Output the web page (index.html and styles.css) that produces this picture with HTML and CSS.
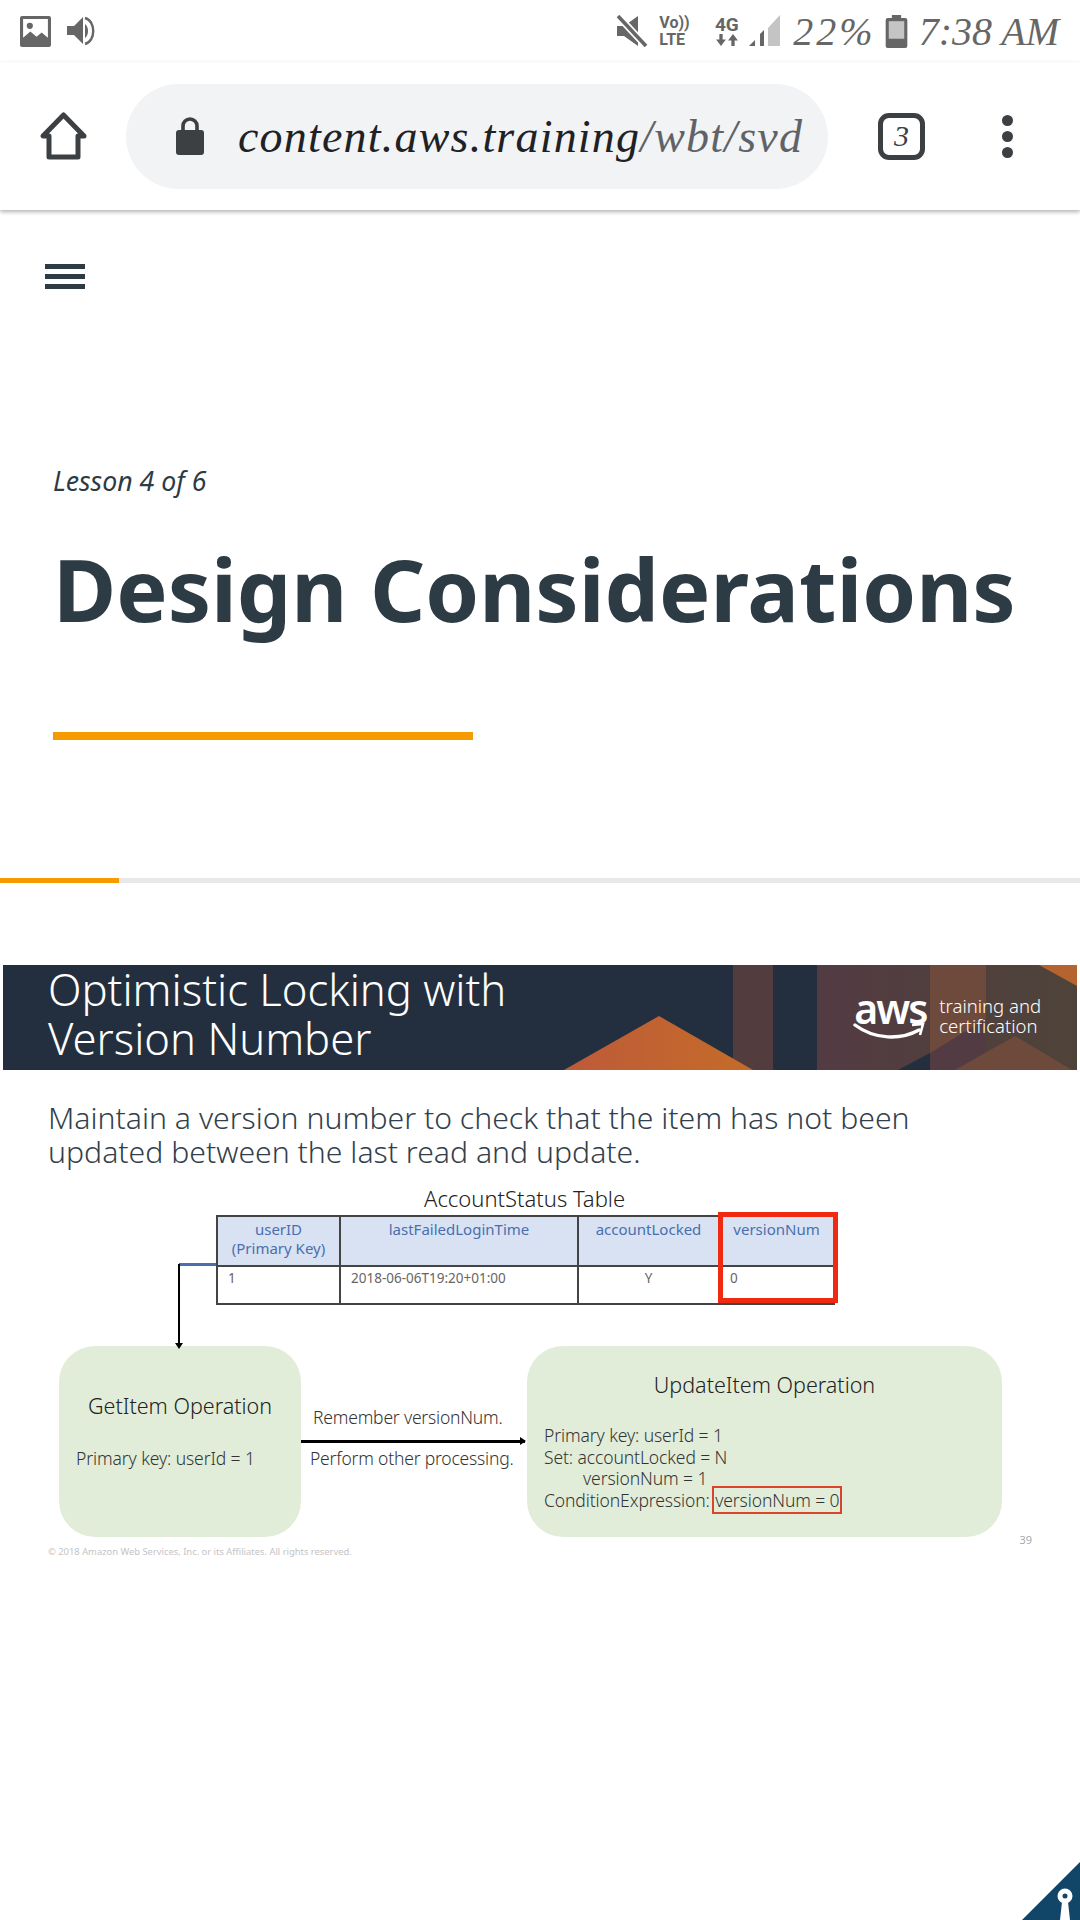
FILE: index.html
```html
<!DOCTYPE html>
<html lang="en">
<head>
    <meta charset="UTF-8">
    <meta name="viewport" content="width=device-width, initial-scale=1.0">
    <title>Design Considerations</title>
    <link rel="stylesheet" href="styles.css">
</head>
<body>
    <div class="page">
        <div class="status">
            <svg class="ico-image" width="31" height="31" viewBox="0 0 30 30">
                <rect width="30" height="30" rx="2" fill="#666"/>
                <path d="M3 3h24v18l-6-5-5 4-6-5-7 6z" fill="#fff"/>
                <circle cx="9.5" cy="9.5" r="3" fill="#666"/>
            </svg>
            <svg class="ico-speaker" width="30" height="30" viewBox="0 0 28 30">
                <path d="M0 10h7l9-9v27l-9-9H0z" fill="#666"/>
                <path d="M18 8c4 3 4 11 0 14z" fill="#666"/>
                <path d="M18 2c11 3 11 23 0 26" fill="none" stroke="#666" stroke-width="2.4"/>
            </svg>
            <div class="status-right">
                <svg class="ico-mute" width="32" height="32" viewBox="0 0 30 32">
                    <path d="M0 11h7l14-10v30L7 21H0z" fill="#666"/>
                    <path d="M2 2l26 28" stroke="#fff" stroke-width="7"/>
                    <path d="M1 1l28 30" stroke="#666" stroke-width="3.6"/>
                </svg>
                <div class="volte"><span>Vo))</span><span>LTE</span></div>
                <div class="net">
                    <span>4G</span>
                    <svg width="22" height="12" viewBox="0 0 20 11">
                        <path d="M3 0h3v5h3l-4.500 6L0 5h3zM14 11h3V6h3l-4.500-6L11 6h3z" fill="#666"/>
                    </svg>
                </div>
                <svg class="ico-signal" width="33" height="32" viewBox="0 0 31 32">
                    <path d="M19 31V13L31 0v31z" fill="#c4c4c4"/>
                    <path d="M11 31V19l4-4v16z" fill="#666"/>
                    <path d="M0 31l6-6v6z" fill="#666"/>
                </svg>
                <span class="hand batt-text">22%</span>
                <svg class="ico-battery" width="23" height="33" viewBox="0 0 21 32">
                    <path d="M6 0h9v3h4a2 2 0 0 1 2 2v25a2 2 0 0 1-2 2H2a2 2 0 0 1-2-2V5a2 2 0 0 1 2-2h4z" fill="#666"/>
                    <rect x="3" y="6" width="15" height="17" fill="#c4c4c4"/>
                </svg>
                <span class="hand clock">7:38 AM</span>
            </div>
        </div>

        <div class="toolbar">
            <svg class="ico-home" width="50" height="50" viewBox="0 0 50 50">
                <path d="M24.500 4L4 25h6v21h29V25h6z" fill="none" stroke="#3c4043" stroke-width="5" stroke-linejoin="round"/>
            </svg>
            <div class="pill">
                <svg class="ico-lock" width="28" height="38" viewBox="0 0 28 38">
                    <path d="M7 14V9a7 7 0 0 1 14 0v5" fill="none" stroke="#3c4043" stroke-width="3.600"/>
                    <rect y="13" width="28" height="25" rx="3" fill="#3c4043"/>
                </svg>
                <div class="url"><b>content.aws.training</b>/wbt/svd</div>
            </div>
            <div class="tabs"><span>3</span></div>
            <div class="dots"><i></i><i></i><i></i></div>
        </div>

        <div class="hamburger"><i></i><i></i><i></i></div>

        <div class="lesson-head">
            <p class="lesson-count">Lesson 4 of 6</p>
            <h1>Design Considerations</h1>
            <div class="accent"></div>
        </div>

        <div class="progress"><div class="progress-fill"></div></div>

        <div class="slide">
            <div class="banner">
                <svg class="banner-art" width="1074" height="105" viewBox="0 0 1074 105">
                    <defs>
                        <linearGradient id="peak" x1="0" x2="1" y1="0" y2="0">
                            <stop offset="0" stop-color="#bd5a3a"/>
                            <stop offset="1" stop-color="#c56c28"/>
                        </linearGradient>
                        <linearGradient id="panel" x1="0" x2="1" y1="0" y2="0">
                            <stop offset="0" stop-color="#533b43"/>
                            <stop offset="1" stop-color="#4e4339"/>
                        </linearGradient>
                    </defs>
                    <rect x="730" width="40" height="105" fill="#533c3e"/>
                    <rect x="814" width="260" height="105" fill="url(#panel)"/>
                    <rect x="927" width="56" height="105" fill="#6e4a3c"/>
                    <path d="M895 105l32-17v17z" fill="#232f3e"/>
                    <path d="M927 88l56-34v51h-56z" fill="#533b43"/>
                    <path d="M952 105l60-34 57 34z" fill="#6e4a3c"/>
                    <path d="M1036 0h38v21z" fill="#b5642f"/>
                    <path d="M561 105l95-54 94 54z" fill="url(#peak)"/>
                </svg>
                <h2>Optimistic Locking with<br>Version Number</h2>
                <div class="aws-logo">
                    <div class="aws-mark">
                        <span>aws</span>
                        <svg width="74" height="20" viewBox="0 0 72 20">
                            <path d="M1 3c20 15 46 15 64 5" fill="none" stroke="#fff" stroke-width="3.400" stroke-linecap="round"/>
                            <path d="M58 3l11-1-3 11" fill="none" stroke="#fff" stroke-width="2.600"/>
                        </svg>
                    </div>
                    <div class="aws-tag">training and<br>certification</div>
                </div>
            </div>

            <p class="slide-lead">Maintain a version number to check that the item has not been updated between the last read and update.</p>

            <div class="table-title">AccountStatus Table</div>
            <div class="table-wrap">
                <table class="status-table">
                    <tr class="head">
                        <th class="col-a">userID<br>(Primary Key)</th>
                        <th class="col-b">lastFailedLoginTime</th>
                        <th class="col-c">accountLocked</th>
                        <th class="col-d">versionNum</th>
                    </tr>
                    <tr class="row">
                        <td>1</td>
                        <td>2018-06-06T19:20+01:00</td>
                        <td class="center">Y</td>
                        <td>0</td>
                    </tr>
                </table>
                <div class="highlight"></div>
                <div class="key-link"></div>
                <div class="key-arrow"></div>
            </div>

            <div class="flow">
                <div class="op op-get">
                    <div class="op-title">GetItem Operation</div>
                    <div class="op-line">Primary key: userId = 1</div>
                </div>
                <div class="between">
                    <div class="between-top">Remember versionNum.</div>
                    <div class="between-arrow"></div>
                    <div class="between-bottom">Perform other processing.</div>
                </div>
                <div class="op op-update">
                    <div class="op-title">UpdateItem Operation</div>
                    <div class="op-line">Primary key: userId = 1</div>
                    <div class="op-line">Set: accountLocked = N</div>
                    <div class="op-line indent">versionNum = 1</div>
                    <div class="op-line">ConditionExpression: <span class="boxed">versionNum = 0</span></div>
                </div>
            </div>

            <div class="slide-foot">
                <span class="copyright">© 2018 Amazon Web Services, Inc. or its Affiliates. All rights reserved.</span>
                <span class="slide-no">39</span>
            </div>
        </div>

        <div class="corner">
            <svg width="58" height="58" viewBox="0 0 58 58">
                <path d="M58 0v58H0z" fill="#124668"/>
                <circle cx="43" cy="34" r="5" fill="none" stroke="#fff" stroke-width="5"/>
                <path d="M40 40h6l2 18H38z" fill="#fff"/>
            </svg>
        </div>
    </div>
</body>
</html>
```

FILE: styles.css
```css
body {
    margin: 0;
    background-color: #fff;
    font-family: "Noto Sans", sans-serif;
}
.page {
    position: relative;
    width: 1080px;
    height: 1920px;
    overflow: hidden;
}

/* status bar */
.status {
    display: flex;
    align-items: center;
    height: 62px;
    padding: 0 21px 0 20px;
    color: #666;
}
.ico-speaker {
    margin-left: 15px;
}
.status-right {
    display: flex;
    align-items: center;
    margin-left: auto;
}
.volte {
    display: flex;
    flex-direction: column;
    margin-left: 11px;
    width: 32px;
    font: bold 16px/17px "Roboto", sans-serif;
}
.net {
    display: flex;
    flex-direction: column;
    align-items: center;
    margin-left: 23px;
    width: 25px;
    font: bold 19px/18px "Roboto", sans-serif;
}
.ico-signal {
    margin-left: 9px;
}
.hand {
    font-family: "Liberation Serif", serif;
    font-style: italic;
}
.batt-text {
    margin-left: 12px;
    font-size: 40px;
    letter-spacing: 3px;
}
.ico-battery {
    margin-left: 9px;
}
.clock {
    margin-left: 11px;
    font-size: 40px;
}

/* browser toolbar */
.toolbar {
    display: flex;
    align-items: center;
    height: 148px;
    box-shadow: 0 2px 4px rgba(0,0,0,0.3);
}
.ico-home {
    margin-left: 39px;
}
.pill {
    display: flex;
    align-items: center;
    width: 702px;
    height: 105px;
    margin-left: 37px;
    border-radius: 53px;
    background-color: #f1f3f4;
}
.ico-lock {
    margin-left: 50px;
}
.url {
    margin-left: 34px;
    font-family: "Liberation Serif", serif;
    font-style: italic;
    font-size: 46px;
    letter-spacing: 1.200px;
    color: #5f6368;
}
.url b {
    font-weight: normal;
    color: #202124;
}
.tabs {
    display: flex;
    align-items: center;
    justify-content: center;
    box-sizing: border-box;
    width: 47px;
    height: 47px;
    margin-left: 50px;
    border: 5px solid #3c4043;
    border-radius: 11px;
    font-family: "Liberation Serif", serif;
    font-style: italic;
    font-size: 30px;
    color: #3c4043;
}
.dots {
    display: flex;
    flex-direction: column;
    gap: 5px;
    margin-left: 77px;
}
.dots i {
    width: 11px;
    height: 11px;
    border-radius: 50%;
    background-color: #3c4043;
}

/* lesson header */
.hamburger {
    display: flex;
    flex-direction: column;
    gap: 5px;
    width: 40px;
    margin: 54px 0 0 45px;
}
.hamburger i {
    height: 5px;
    background-color: #2d3b45;
}
.lesson-head {
    padding-left: 53px;
}
.lesson-count {
    margin: 175px 0 0;
    font-style: italic;
    font-size: 26.700px;
    line-height: 34px;
    color: #2d3b45;
}
h1 {
    margin: 41px 0 0;
    font-weight: 700;
    font-size: 86.300px;
    line-height: 100px;
    color: #2d3b45;
}
.accent {
    width: 420px;
    height: 8px;
    margin-top: 93px;
    background-color: #f59b00;
}
.progress {
    height: 5px;
    margin-top: 138px;
    background-color: #e8e8e8;
}
.progress-fill {
    width: 119px;
    height: 5px;
    background-color: #f59b00;
}

/* slide */
.slide {
    margin: 82px 3px 0;
    font-weight: 300;
}
.banner {
    position: relative;
    height: 105px;
    background-color: #232f3e;
}
.banner-art {
    position: absolute;
    top: 0;
    left: 0;
}
.banner h2 {
    position: relative;
    margin: 0;
    padding-left: 45px;
    font-weight: 300;
    font-size: 43.600px;
    line-height: 49px;
    color: #fff;
}
.aws-logo {
    position: absolute;
    top: 29px;
    right: 36px;
    display: flex;
    gap: 12px;
    color: #fff;
}
.aws-mark {
    position: relative;
    width: 74px;
}
.aws-mark span {
    display: block;
    font-size: 41px;
    font-weight: 600;
    letter-spacing: -2px;
    line-height: 28px;
    text-align: center;
}
.aws-mark svg {
    display: block;
}
.aws-tag {
    padding-top: 2px;
    font-size: 18.500px;
    line-height: 20px;
}
.slide-lead {
    width: 980px;
    margin: 31px 0 0 45px;
    font-size: 30.200px;
    line-height: 34px;
    color: #333f4c;
}
.table-title {
    margin: 14px 0 0 421px;
    font-size: 22px;
    line-height: 30px;
    color: #222;
}
.table-wrap {
    position: relative;
    width: 619px;
    margin: 2px 0 0 213px;
}
.status-table {
    width: 619px;
    border-collapse: collapse;
    table-layout: fixed;
}
.status-table th,
.status-table td {
    box-sizing: border-box;
    border: 2px solid #444;
    vertical-align: top;
    font-weight: 400;
}
.head {
    height: 50px;
}
.head th {
    padding: 3px 2px 0;
    background-color: #d8e2f3;
    font-size: 15px;
    line-height: 19px;
    color: #4a6fae;
    font-weight: 400;
}
.row {
    height: 38px;
}
.row td {
    padding: 1px 10px 0;
    font-size: 13.500px;
    line-height: 20px;
    color: #666;
}
.row .center {
    text-align: center;
}
.col-a { width: 123px; }
.col-b { width: 238px; }
.col-c { width: 141px; }
.highlight {
    position: absolute;
    top: -3px;
    left: 502px;
    width: 120px;
    height: 91px;
    box-sizing: border-box;
    border: 5px solid #ef2a10;
}
.key-link {
    position: absolute;
    top: 48px;
    left: -37px;
    width: 37px;
    height: 3px;
    background-color: #4a6fae;
}
.key-arrow {
    position: absolute;
    top: 49px;
    left: -38px;
    width: 2px;
    height: 82px;
    background-color: #000;
}
.key-arrow::after {
    content: "";
    position: absolute;
    bottom: -3px;
    left: -3px;
    border-left: 4px solid transparent;
    border-right: 4px solid transparent;
    border-top: 6px solid #000;
}
.flow {
    display: flex;
    margin: 41px 0 0 56px;
}
.op {
    box-sizing: border-box;
    height: 191px;
    border-radius: 36px;
    background-color: #e1edd9;
    color: #333;
}
.op-get {
    width: 242px;
    padding: 45px 0 0 17px;
}
.op-get .op-title {
    padding-right: 17px;
    text-align: center;
}
.op-get .op-line {
    margin-top: 27px;
}
.op-update {
    width: 475px;
    margin-left: 2px;
    padding: 24px 0 0 17px;
}
.op-update .op-title {
    padding-right: 17px;
    margin-bottom: 25px;
    text-align: center;
}
.op-title {
    font-size: 21.500px;
    line-height: 30px;
    font-weight: 300;
    color: #222;
}
.op-line {
    font-size: 17.500px;
    letter-spacing: -0.100px;
    line-height: 21.500px;
    font-weight: 300;
}
.indent {
    padding-left: 39px;
}
.boxed {
    outline: 2px solid #d9442a;
    padding: 0 1px;
}
.between {
    width: 224px;
    padding-top: 58px;
    font-size: 17.500px;
    letter-spacing: -0.200px;
    font-weight: 300;
    white-space: nowrap;
    color: #333;
}
.between-top {
    padding-left: 12px;
    line-height: 26px;
}
.between-arrow {
    position: relative;
    height: 3px;
    margin-top: 10px;
    background-color: #000;
}
.between-arrow::after {
    content: "";
    position: absolute;
    top: -3px;
    right: -1px;
    border-top: 4px solid transparent;
    border-bottom: 4px solid transparent;
    border-left: 6px solid #000;
}
.between-bottom {
    padding: 2px 0 0 9px;
    line-height: 26px;
}
.slide-foot {
    display: flex;
    justify-content: space-between;
    align-items: flex-start;
    width: 984px;
    margin: 3px 0 0 45px;
    font-weight: 400;
    font-size: 9.400px;
    color: #c4c4c4;
}
.copyright {
    padding-top: 5px;
}
.slide-no {
    font-size: 11px;
    margin-top: -8px;
    color: #aaa;
}

.corner {
    position: absolute;
    right: 0;
    bottom: 0;
    width: 58px;
    height: 58px;
}
```
